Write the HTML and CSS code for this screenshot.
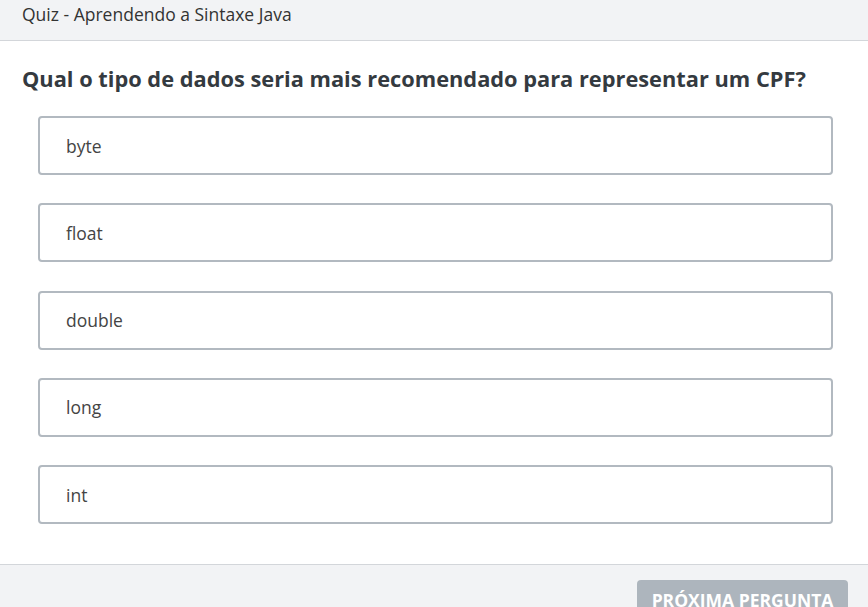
FILE: index.html
```html
<!DOCTYPE html>
<html lang="pt">
<head>
<meta charset="utf-8">
<title>Quiz - Aprendendo a Sintaxe Java</title>
<link rel="stylesheet" href="styles.css">
</head>
<body>
<header class="topbar">Quiz - Aprendendo a Sintaxe Java</header>
<main class="content">
  <h1 class="question">Qual o tipo de dados seria mais recomendado para representar um CPF?</h1>
  <ul class="options">
    <li class="option">byte</li>
    <li class="option">float</li>
    <li class="option">double</li>
    <li class="option">long</li>
    <li class="option">int</li>
  </ul>
</main>
<footer class="footer">
  <button class="next" disabled>Próxima pergunta</button>
</footer>
</body>
</html>
```
FILE: styles.css
```css
* { box-sizing: border-box; }
html, body { margin: 0; padding: 0; }
body {
  font-family: "Open Sans", "Noto Sans", sans-serif;
  color: #343a40;
  background: #fff;
  overflow: hidden;
}
.topbar {
  height: 41px;
  background: #f2f3f5;
  border-bottom: 1px solid #d3d6da;
  padding: 0 22px;
  font-size: 17.5px;
  line-height: 28px;
  color: #333;
}
.content {
  padding: 22px 22px 40px 22px;
}
.question {
  margin: 0;
  font-size: 21.8px;
  font-weight: 700;
  line-height: 32px;
  color: #343a40;
}
.options {
  list-style: none;
  margin: 21px 0 0 16px;
  padding: 0;
  width: 795px;
  display: flex;
  flex-direction: column;
  gap: 28.25px;
}
.option {
  height: 59px;
  border: 2px solid #b2b9c0;
  border-radius: 4px;
  display: flex;
  align-items: center;
  padding: 0 26px;
  font-size: 17.5px;
  color: #444;
}
.footer {
  background: #f2f3f5;
  border-top: 1px solid #d3d6da;
  height: 60px;
  display: flex;
  justify-content: flex-end;
  padding: 15px 20px 0;
}
.next {
  width: 211px;
  height: 44px;
  background: #adb5bd;
  border: none;
  border-radius: 4px;
  color: #fff;
  font-family: "Open Sans", "Noto Sans", sans-serif;
  font-size: 17.5px;
  font-weight: 700;
  text-transform: uppercase;
  padding: 7px 0 0;
  align-self: flex-start;
  line-height: 26px;
  display: flex;
  justify-content: center;
  align-items: flex-start;
  white-space: nowrap;
}
```
